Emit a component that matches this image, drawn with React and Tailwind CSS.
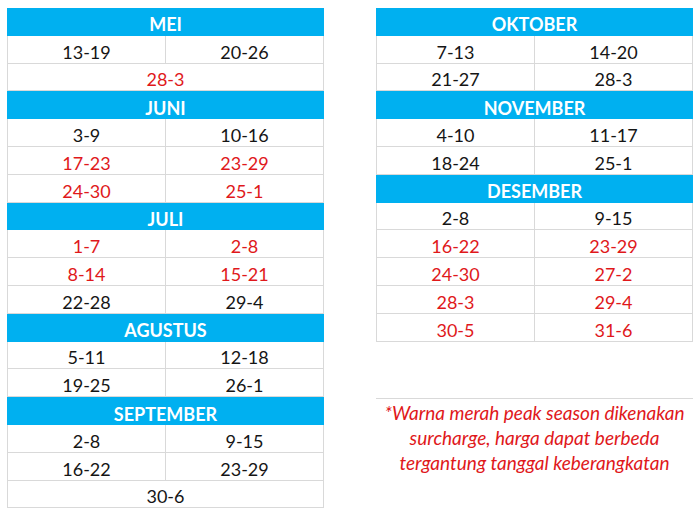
import React from 'react'

const months = {
  left: [
    { name: 'MEI', rows: [[['13-19'], ['20-26']], [['28-3', true]]] },
    { name: 'JUNI', rows: [[['3-9'], ['10-16']], [['17-23', true], ['23-29', true]], [['24-30', true], ['25-1', true]]] },
    { name: 'JULI', rows: [[['1-7', true], ['2-8', true]], [['8-14', true], ['15-21', true]], [['22-28'], ['29-4']]] },
    { name: 'AGUSTUS', rows: [[['5-11'], ['12-18']], [['19-25'], ['26-1']]] },
    { name: 'SEPTEMBER', rows: [[['2-8'], ['9-15']], [['16-22'], ['23-29']], [['30-6']]] },
  ],
  right: [
    { name: 'OKTOBER', rows: [[['7-13'], ['14-20']], [['21-27'], ['28-3']]] },
    { name: 'NOVEMBER', rows: [[['4-10'], ['11-17']], [['18-24'], ['25-1']]] },
    { name: 'DESEMBER', rows: [[['2-8'], ['9-15']], [['16-22', true], ['23-29', true]], [['24-30', true], ['27-2', true]], [['28-3', true], ['29-4', true]], [['30-5', true], ['31-6', true]]] },
  ],
}

const Month = ({ month }) => (
  <div>
    <div className="h-[27.8px] pt-[5px] bg-[#00b0f0] text-white font-bold flex items-center justify-center">
      {month.name}
    </div>
    {month.rows.map((row, i) => (
      <div key={i} className="h-[27.8px] flex border-x border-b border-[#d9d9d9]">
        {row.map(([label, peak], j) => (
          <div
            key={j}
            className={`flex-1 pt-[5px] flex items-center justify-center ${j > 0 ? 'border-l border-[#d9d9d9]' : ''} ${peak ? 'text-[#e0181b]' : 'text-[#151515]'}`}
          >
            {label}
          </div>
        ))}
      </div>
    ))}
  </div>
)

export default function App() {
  return (
    <div className="w-[700px] h-[516px] bg-white flex gap-[52px] pl-[7px] pt-[8px] font-['Lato',sans-serif] text-[18px] leading-none">
      <div className="w-[317px] flex flex-col">
        {months.left.map(m => <Month key={m.name} month={m} />)}
      </div>
      <div className="w-[317px] flex flex-col">
        {months.right.map(m => <Month key={m.name} month={m} />)}
        <div className="mt-[56px] border-t border-[#d9d9d9] pt-[1px] text-center italic text-[#e0181b] text-[19px] leading-[25px]">
          *Warna merah peak season dikenakan<br />
          surcharge, harga dapat berbeda<br />
          tergantung tanggal keberangkatan
        </div>
      </div>
    </div>
  )
}
